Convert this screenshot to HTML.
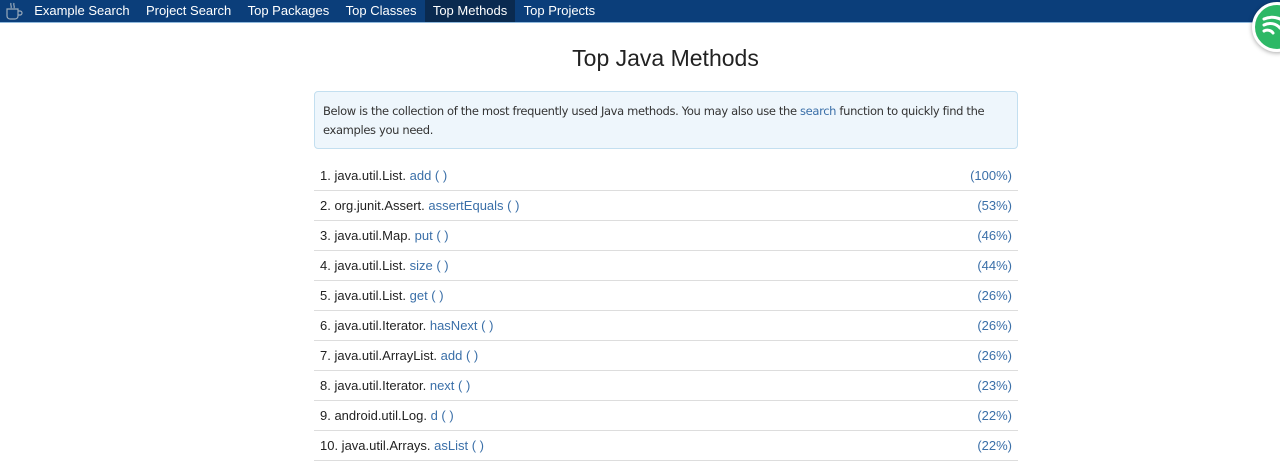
<!DOCTYPE html>
<html><head><style>
body{margin:0;background:#fff;font-family:"Liberation Sans",Arial,sans-serif;width:1280px;height:472px;overflow:hidden;position:relative}
.nav{height:22px;background:#0b3e7a;border-bottom:1px solid #8fb8dc;display:flex;align-items:center;color:#fff;font-size:13px}
.nav span{padding:0 8.2px;line-height:22px}
.nav .act{background:#0a2a50}
.cup{width:24px;height:22px;margin-left:2px}
h1{position:absolute;top:45px;left:0;width:1331px;text-align:center;font-weight:normal;font-size:23px;color:#222;margin:0}
.alert{position:absolute;left:314px;top:91px;width:686px;height:38px;padding:10px 8px 8px;background:#eef6fc;border:1px solid #c3dff0;border-radius:4px;font-size:11.5px;line-height:19px;color:#333;font-family:"DejaVu Sans",sans-serif;letter-spacing:-0.35px}
a{color:#3a6fa8;text-decoration:none}
.list{position:absolute;left:314px;top:161px;width:704px}
.row{height:29px;border-bottom:1px solid #ddd;display:flex;justify-content:space-between;align-items:center;padding:0 6px;font-size:13px;color:#222}
.badge{position:absolute;right:-22px;top:2px;width:44px;height:44px;border-radius:50%;background:#2db866;border:3px solid #fff;box-shadow:0 1px 5px rgba(0,0,0,.35)}
</style></head><body>
<div class="nav">
<svg class="cup" viewBox="0 0 24 22"><path d="M5 9h11v7a3 3 0 0 1-3 3H8a3 3 0 0 1-3-3z M16 11h2a2 2 0 0 1 0 4h-2 M9 3c-1 2 1 3 0 5 M12 3c-1 2 1 3 0 5" fill="none" stroke="#9ab" stroke-width="1.2"/></svg>
<span>Example Search</span><span>Project Search</span><span>Top Packages</span><span>Top Classes</span><span class="act">Top Methods</span><span>Top Projects</span></div>
<div class="badge"><svg width="44" height="44" viewBox="0 0 44 44"><path d="M9 14a20 20 0 0 1 22 4M9 20a13 13 0 0 1 16 3M9 26a7 7 0 0 1 9 2" stroke="#fff" stroke-width="3" fill="none" stroke-linecap="round"/></svg></div>
<h1>Top Java Methods</h1>
<div class="alert">Below is the collection of the most frequently used Java methods. You may also use the <a>search</a> function to quickly find the examples you need.</div>
<div class="list">
<div class="row"><span>1. java.util.List. <a>add ( )</a></span><a>(100%)</a></div>
<div class="row"><span>2. org.junit.Assert. <a>assertEquals ( )</a></span><a>(53%)</a></div>
<div class="row"><span>3. java.util.Map. <a>put ( )</a></span><a>(46%)</a></div>
<div class="row"><span>4. java.util.List. <a>size ( )</a></span><a>(44%)</a></div>
<div class="row"><span>5. java.util.List. <a>get ( )</a></span><a>(26%)</a></div>
<div class="row"><span>6. java.util.Iterator. <a>hasNext ( )</a></span><a>(26%)</a></div>
<div class="row"><span>7. java.util.ArrayList. <a>add ( )</a></span><a>(26%)</a></div>
<div class="row"><span>8. java.util.Iterator. <a>next ( )</a></span><a>(23%)</a></div>
<div class="row"><span>9. android.util.Log. <a>d ( )</a></span><a>(22%)</a></div>
<div class="row"><span>10. java.util.Arrays. <a>asList ( )</a></span><a>(22%)</a></div>
</div>
</body></html>
